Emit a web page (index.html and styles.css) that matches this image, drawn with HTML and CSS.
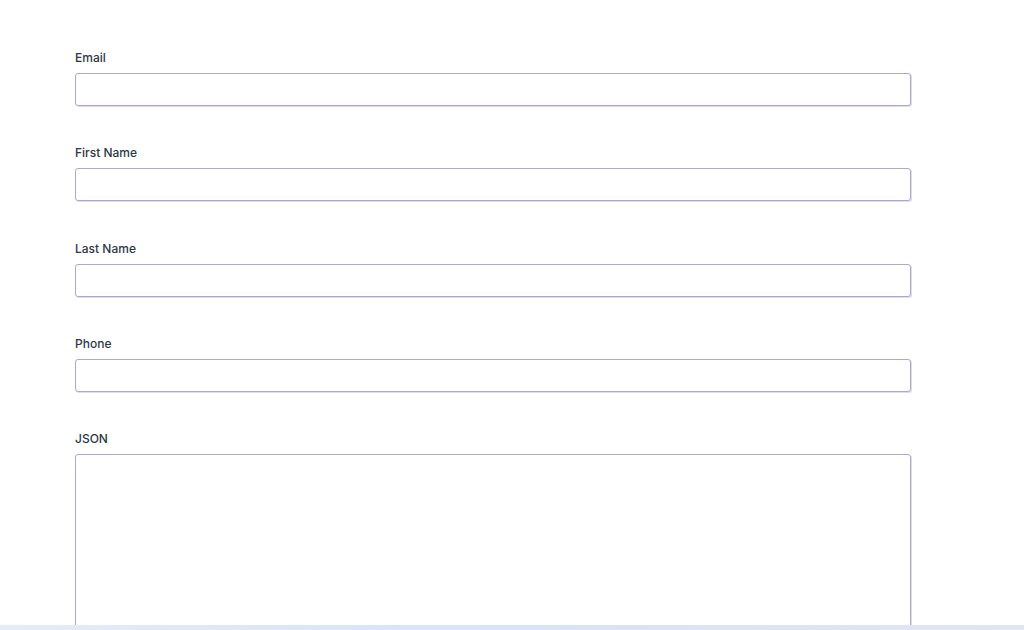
FILE: index.html
```html
<!DOCTYPE html>
<html>
<head>
<meta charset="utf-8">
<link rel="stylesheet" href="styles.css">
</head>
<body>
<form class="form">
  <div class="field">
    <label class="label">Email</label>
    <input class="input" type="text">
  </div>
  <div class="field">
    <label class="label">First Name</label>
    <input class="input" type="text">
  </div>
  <div class="field">
    <label class="label">Last Name</label>
    <input class="input" type="text">
  </div>
  <div class="field">
    <label class="label">Phone</label>
    <input class="input" type="text">
  </div>
  <div class="field">
    <label class="label">JSON</label>
    <textarea class="textarea"></textarea>
  </div>
</form>
<div class="bottom-bar"></div>
</body>
</html>
```
FILE: styles.css
```css
html, body {
  margin: 0;
  padding: 0;
  background: #ffffff;
  overflow: hidden;
  height: 630px;
}
body {
  font-family: Inter, "Noto Sans", sans-serif;
}
.form {
  display: flex;
  flex-direction: column;
  gap: 38.25px;
  padding: 49px 0 0 75px;
  width: 837px;
}
.field {
  display: flex;
  flex-direction: column;
  gap: 6px;
}
.label {
  font-size: 12px;
  line-height: 18px;
  font-weight: 500;
  color: #2d3748;
}
.input, .textarea {
  box-sizing: border-box;
  width: 836px;
  margin: 0;
  border: 1px solid #aaa7d2;
  border-radius: 3px;
  background: #fff;
  box-shadow: 1px 1px 0 rgba(160, 158, 200, 0.35);
  font-family: inherit;
  font-size: 13px;
  outline: none;
}
.input {
  height: 33px;
  padding: 0 10px;
}
.textarea {
  height: 190px;
  padding: 8px 10px;
  resize: none;
  display: block;
}
.bottom-bar {
  position: fixed;
  left: 0;
  right: 0;
  bottom: 0;
  height: 5px;
  background: linear-gradient(90deg, #e4ecf7 0%, #d8e4f9 40%, #dbe3f5 70%, #dfe5f3 100%);
}
```
